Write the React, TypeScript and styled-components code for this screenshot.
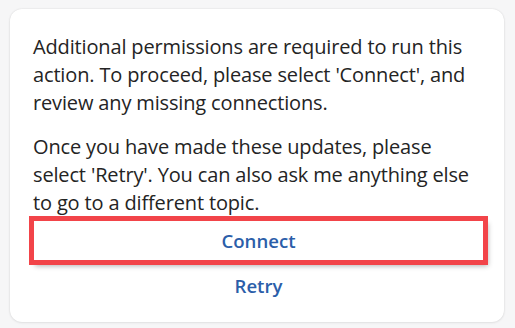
import styled, { createGlobalStyle } from "styled-components";

const GlobalStyle = createGlobalStyle`
  html, body {
    margin: 0;
    padding: 0;
    background: #f6f6f7;
  }
  body {
    font-family: "Open Sans", "Noto Sans", sans-serif;
  }
`;

export default function App() {
  return (
    <>
      <GlobalStyle />
      <Page>
        <Card>
          <Message>
            Additional permissions are required to run this action. To
            proceed, please select 'Connect', and review any missing
            connections.
          </Message>
          <Message>
            Once you have made these updates, please select 'Retry'. You can
            also ask me anything else to go to a different topic.
          </Message>
          <Actions>
            <ActionButton $highlighted>Connect</ActionButton>
            <ActionButton>Retry</ActionButton>
          </Actions>
        </Card>
      </Page>
    </>
  );
}

const Page = styled.div`
  width: 515px;
  height: 328px;
  padding: 9px 11px 6px 10px;
  box-sizing: border-box;
`;

const Card = styled.div`
  background: #ffffff;
  border-radius: 12px;
  box-shadow: 0 0 2px rgba(0, 0, 0, 0.12), 0 1px 3px rgba(0, 0, 0, 0.06);
  padding: 24px 21px 16px 23px;
  box-sizing: border-box;
  height: 313px;
`;

const Message = styled.p`
  margin: 0 0 16px;
  font-size: 20px;
  line-height: 28px;
  color: #242424;
  letter-spacing: -0.15px;

  &:last-of-type {
    margin-bottom: 4px;
  }
`;

const Actions = styled.div`
  display: flex;
  flex-direction: column;
  gap: 6px;
  padding-left: 1px;
`;

const ActionButton = styled.button<{ $highlighted?: boolean }>`
  height: 39px;
  border: none;
  background: transparent;
  font-family: "Open Sans", "Noto Sans", sans-serif;
  font-size: 18.6px;
  font-weight: 600;
  color: #2b5ea9;
  cursor: pointer;
  outline: ${(p) => (p.$highlighted ? "5px solid #f24449" : "none")};
  box-shadow: ${(p) =>
    p.$highlighted ? "3px 4px 5px 2px rgba(0, 0, 0, 0.3)" : "none"};
`;
